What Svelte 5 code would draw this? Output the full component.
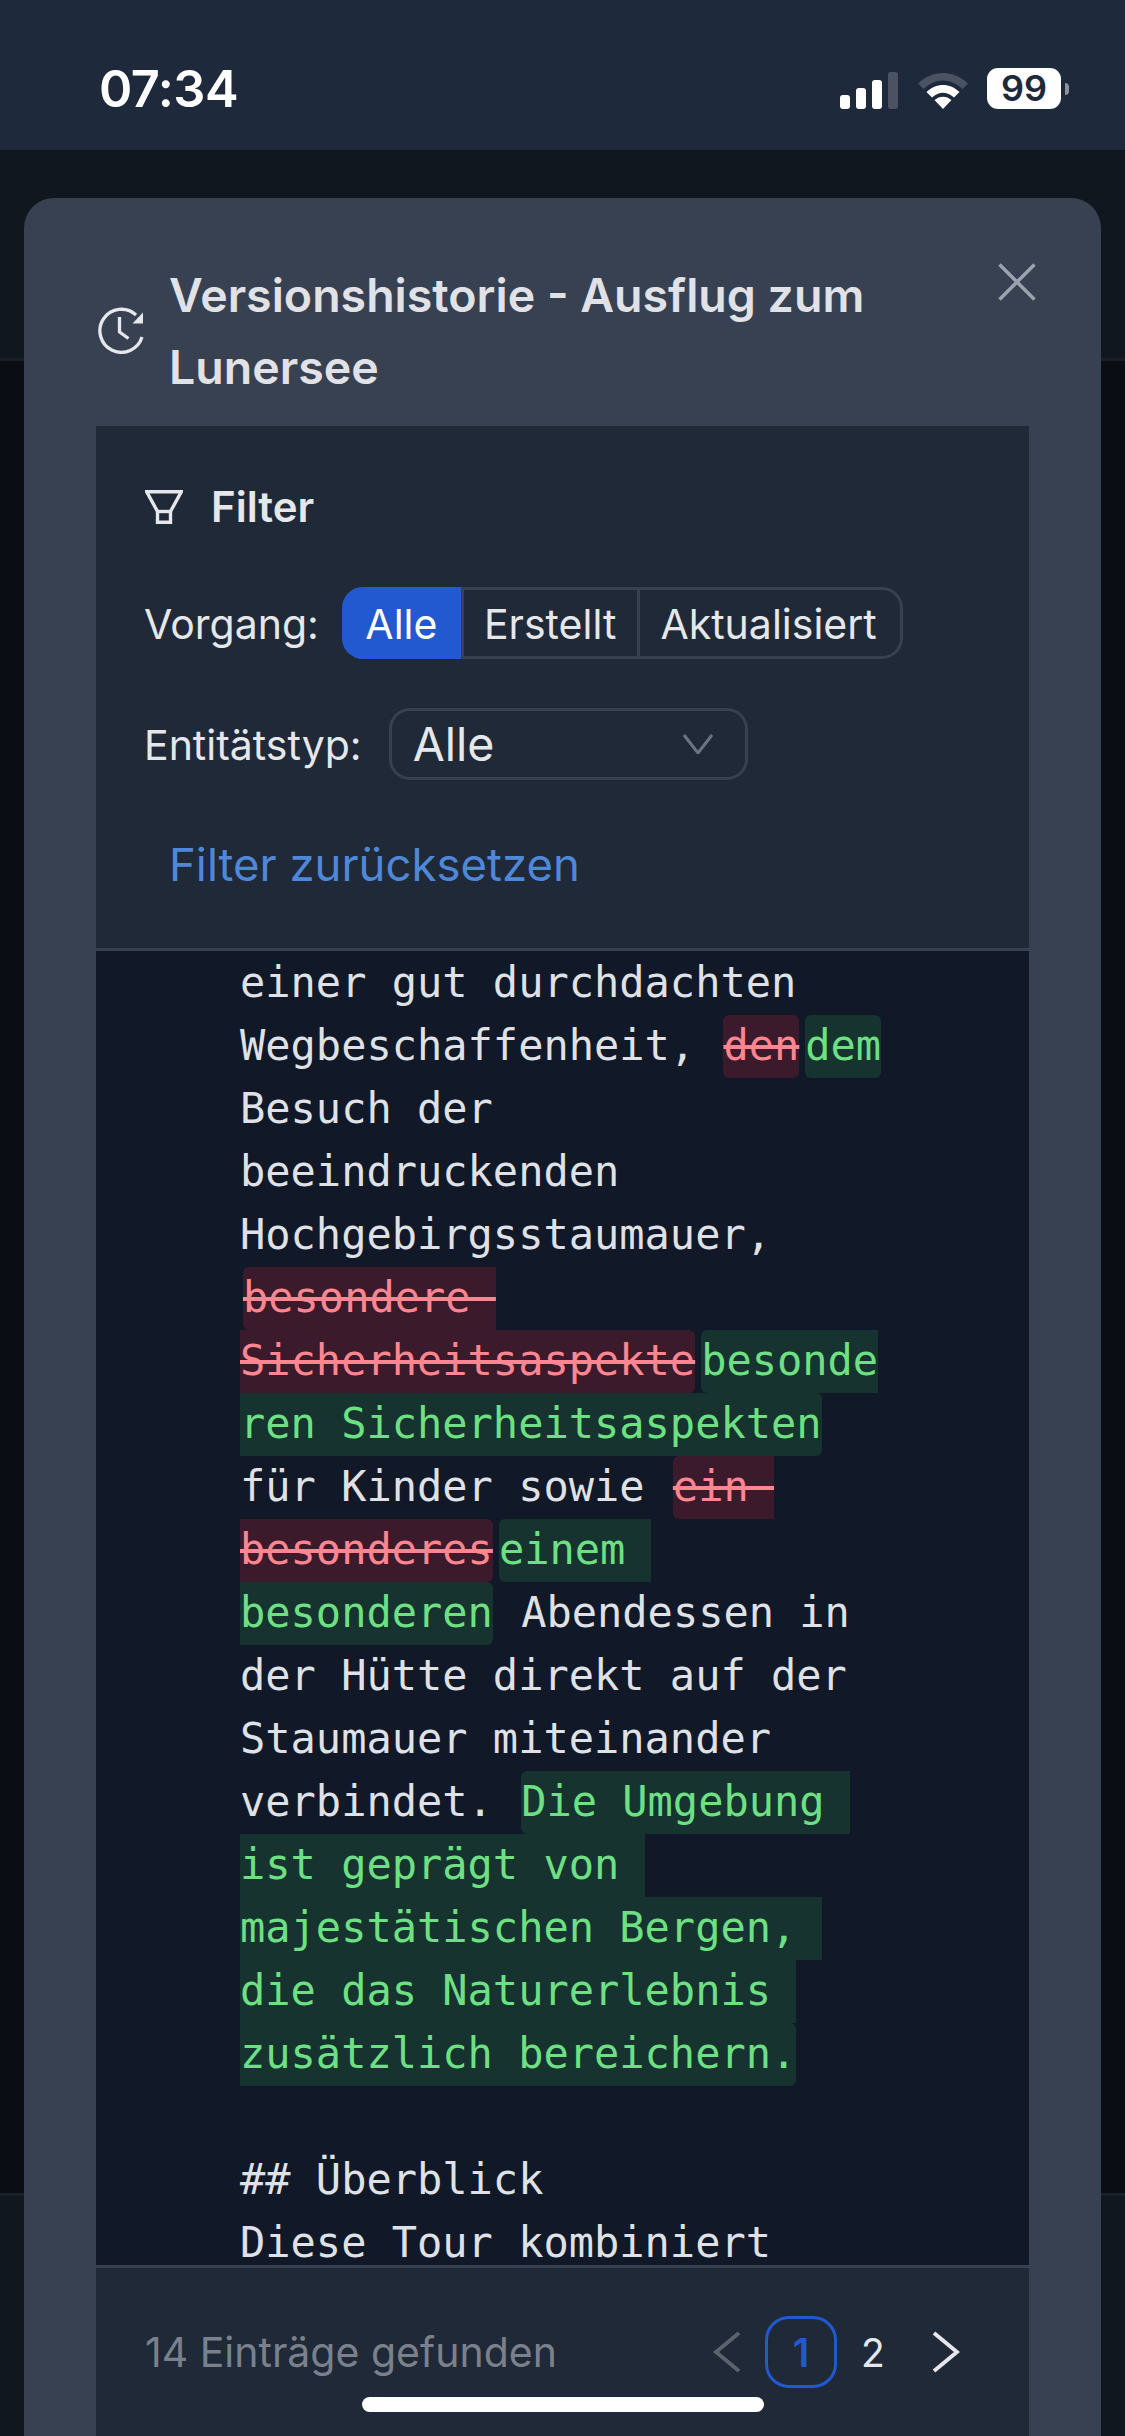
<script>
  const opts = ['Alle', 'Erstellt', 'Aktualisiert'];
</script>

<div class="screen">
  <header class="status">
    <span class="time">07:34</span>
    <div class="status-icons">
      <svg class="signal" width="58" height="37" viewBox="0 0 58 37">
        <rect x="0" y="23" width="10" height="14" rx="3" fill="#fff"/>
        <rect x="16" y="16" width="10" height="21" rx="3" fill="#fff"/>
        <rect x="32" y="8" width="10" height="29" rx="3" fill="#fff"/>
        <rect x="48" y="0" width="10" height="37" rx="3" fill="#4b5362"/>
      </svg>
      <svg class="wifi" width="52" height="37" viewBox="0 0 52 37">
        <path d="M1 11.500 C15.500 -2.500 36.500 -2.500 51 11.500 L45.500 17 C33 5.500 19 5.500 6.500 17Z" fill="#4b5362"/>
        <path d="M9.500 20 C19 10.500 33 10.500 42.500 20 L37 25.500 C30 19 22 19 15 25.500Z" fill="#fff"/>
        <path d="M17.500 28 C22.500 23.500 29.500 23.500 34.500 28 L26 37Z" fill="#fff"/>
      </svg>
      <div class="battery"><span>99</span></div>
      <i class="nub"></i>
    </div>
  </header>

  <div class="backdrop">
    <div class="bd-top"></div>
    <div class="bd-mid"></div>
    <div class="bd-bot"></div>
  </div>

  <section class="modal">
    <div class="title-row">
      <svg class="clock" width="48" height="48" viewBox="0 0 48 48" fill="none" stroke="#e5e7eb" stroke-width="3.300">
        <path d="M45 31 A21.500 21.500 0 1 1 39 9"/>
        <path d="M46 6.500 V17.500 H35.500 Z" fill="#e5e7eb" stroke="none"/>
        <path d="M22.500 11 V26 L31.500 32.500"/>
      </svg>
      <h1>Versionshistorie - Ausflug zum Lunersee</h1>
      <svg class="close" width="38" height="38" viewBox="0 0 38 38" stroke="#9ca3af" stroke-width="3.400" fill="none">
        <path d="M1.500 1.500 L36.500 36.500 M36.500 1.500 L1.500 36.500"/>
      </svg>
    </div>

    <div class="filters">
      <div class="filter-head">
        <svg width="38" height="34" viewBox="0 0 38 34" fill="none" stroke="#e5e7eb" stroke-width="3.400">
          <path d="M1.700 1.700 H36.300 L25.500 21.500 V32.300 H12.500 V21.500 Z" stroke-linejoin="miter"/>
          <path d="M12.500 21.500 H25.500"/>
        </svg>
        <span>Filter</span>
      </div>
      <div class="row first">
        <span class="label">Vorgang:</span>
        <div class="group">
          {#each opts as o, i}
            <span class="opt" class:active={i === 0}>{o}</span>
          {/each}
        </div>
      </div>
      <div class="row second">
        <span class="label">Entitätstyp:</span>
        <div class="select">
          <span>Alle</span>
          <svg width="30" height="20" viewBox="0 0 30 20" fill="none" stroke="#6b7280" stroke-width="3">
            <path d="M1 1 L15 19 L29 1"/>
          </svg>
        </div>
      </div>
      <div class="reset">Filter zurücksetzen</div>
    </div>

    <div class="code">
<pre>einer gut durchdachten
Wegbeschaffenheit, <del>den</del><ins>dem</ins>
Besuch der
beeindruckenden
Hochgebirgsstaumauer,
<del>besondere 
Sicherheitsaspekte</del><ins>besonde
ren Sicherheitsaspekten</ins>
für Kinder sowie <del>ein 
besonderes</del><ins>einem 
besonderen</ins> Abendessen in
der Hütte direkt auf der
Staumauer miteinander
verbindet. <ins>Die Umgebung 
ist geprägt von 
majestätischen Bergen, 
die das Naturerlebnis 
zusätzlich bereichern.</ins>

## Überblick
Diese Tour kombiniert</pre>
    </div>

    <footer class="foot">
      <span class="count">14 Einträge gefunden</span>
      <nav class="pager">
        <svg width="28" height="42" viewBox="0 0 28 42" fill="none" stroke="#5b626e" stroke-width="4"><path d="M26 2 L3 21 L26 40"/></svg>
        <span class="page current">1</span>
        <span class="page">2</span>
        <svg width="28" height="42" viewBox="0 0 28 42" fill="none" stroke="#e5e7eb" stroke-width="4"><path d="M2 2 L25 21 L2 40"/></svg>
      </nav>
    </footer>
  </section>

  <div class="home"></div>
</div>

<style>
  :global(body) { margin: 0; background: #0a0d14; }
  .screen {
    position: relative;
    width: 1125px;
    height: 2436px;
    overflow: hidden;
    font-family: Inter, "Liberation Sans", sans-serif;
    display: flex;
    flex-direction: column;
    background: #10171f;
  }
  .status {
    height: 150px;
    flex: none;
    background: #1e293b;
    display: flex;
    justify-content: space-between;
    align-items: flex-start;
    padding: 68px 64px 0 99px;
    box-sizing: border-box;
    color: #fff;
  }
  .time { font-size: 50.500px; font-weight: 600; line-height: 42px; letter-spacing: -0.5px; }
  .status-icons { display: flex; align-items: center; gap: 19px; height: 41px; position: relative; }
  .signal, .wifi { margin-top: 4px; }
  .battery {
    width: 74px; height: 41px; background: #fff; border-radius: 11px; margin-left: -1px;
    display: flex; align-items: center; justify-content: center;
    color: #1e293b; font-size: 36px; font-weight: 600; line-height: 41px;
  }
  .nub {
    position: absolute; right: -8px; top: 15px; width: 4px; height: 12px;
    background: #8d939d; border-radius: 0 4px 4px 0;
  }
  .backdrop { flex: 1; display: flex; flex-direction: column; }
  .bd-top { height: 208px; background: #10171f; }
  .bd-mid { flex: 1; background: #0a0d14; border-top: 3px solid #1a2029; }
  .bd-bot { height: 240px; background: #10171f; border-top: 3px solid #1a2029; }

  .modal {
    position: absolute;
    left: 24px; right: 24px; top: 198px; bottom: -40px;
    background: #374151;
    border-radius: 30px 30px 0 0;
    display: flex;
    flex-direction: column;
    padding: 0 72px;
    box-sizing: border-box;
  }
  .title-row { position: relative; height: 228px; flex: none; display: flex; align-items: flex-start; }
  .clock { position: absolute; left: 1px; top: 108px; }
  h1 {
    margin: 61px 0 0 73px;
    width: 760px;
    font-size: 46.500px;
    font-weight: 600;
    line-height: 72px;
    color: #e0e2e7;
  }
  .close { position: absolute; left: 902px; top: 65px; }

  .filters {
    flex: none;
    background: #1f2937;
    height: 525px;
    box-sizing: border-box;
    border-bottom: 3px solid #374151;
    padding: 64px 49px 0;
    color: #e5e7eb;
  }
  .filter-head { display: flex; align-items: center; gap: 28px; height: 34px; font-size: 42px; font-weight: 600; line-height: 34px; }
  .filter-head svg { flex: none; }
  .row { display: flex; align-items: center; font-size: 41px; }
  .label { padding-top: 2px; margin-left: -1px; }
  .first { margin-top: 63px; gap: 23px; }
  .second { margin-top: 49px; gap: 27px; }
  .group {
    display: flex; height: 72px; box-sizing: border-box;
    border: 3px solid #374151; border-radius: 21px;
    width: 561px;
  }
  .opt {
    display: flex; align-items: center; justify-content: center;
    font-size: 41px; padding: 2px 21px 0 20px; border-left: 3px solid #374151;
    line-height: 64px;
  }
  .opt:first-child { border-left: 0; }
  .active {
    background: #2259d0; color: #fff; margin: -3px 0 -3px -3px;
    border-radius: 21px 0 0 21px; width: 119px; padding: 2px 0 0; flex: none;
  }
  .select {
    width: 359px; height: 72px; box-sizing: border-box;
    border: 3px solid #374151; border-radius: 21px;
    display: flex; align-items: center; justify-content: space-between;
    padding: 0 32px 0 21px; font-size: 46.500px;
  }
  .reset { margin: 49px 0 0 24px; font-size: 45.500px; line-height: 72px; color: #4f88d8; }

  .code { flex: none; height: 1314px; background: #111827; overflow: hidden; }
  pre {
    margin: 0;
    padding-left: 144px;
    font-family: "DejaVu Sans Mono", monospace;
    font-size: 42px;
    line-height: 63px;
    color: #dfe1e6;
    white-space: pre;
  }
  del, ins {
    margin: 0 3px;
    padding: 6px 0 8px;
    border-radius: 6px;
    text-decoration: none;
  }
  del { background: #3b1a2b; color: #ff8591; text-decoration: line-through; }
  ins { background: #163330; color: #6ee083; }

  .foot {
    flex: 1;
    background: #1f2937;
    border-top: 3px solid #374151;
    display: flex;
    align-items: flex-start;
    justify-content: space-between;
    padding: 48px 69px 0 49px;
  }
  .count { font-size: 41px; line-height: 72px; color: #7b818c; }
  .pager { display: flex; align-items: center; height: 72px; }
  .pager svg { flex: none; }
  .page { width: 72px; height: 72px; box-sizing: border-box; display: flex; align-items: center; justify-content: center; font-size: 39px; color: #e5e7eb; margin-right: 23px; }
  .current { border: 3px solid #2259d0; border-radius: 24px; color: #2259d0; font-weight: 600; margin: 0 0 0 24px; }
  .home {
    position: absolute; left: 362px; top: 2397px; width: 402px; height: 15px;
    background: #fff; border-radius: 8px;
  }
</style>
